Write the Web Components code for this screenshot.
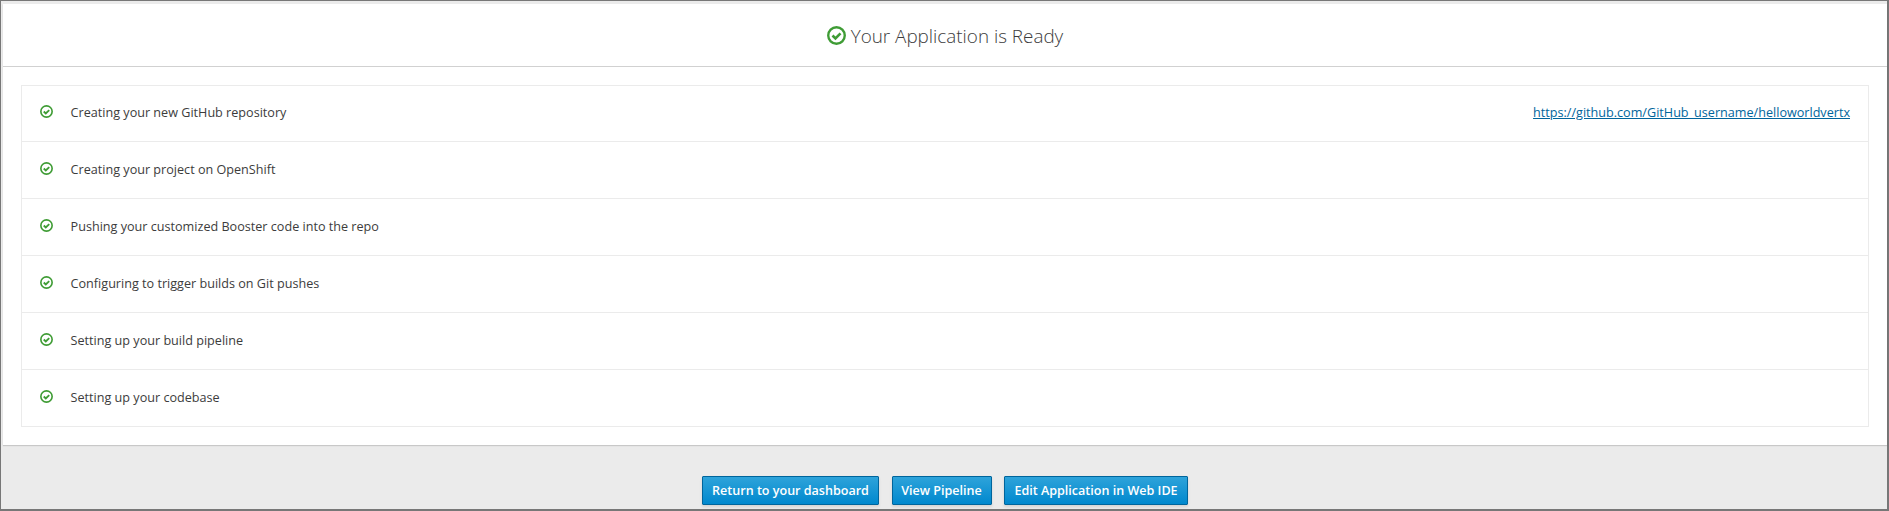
<!DOCTYPE html>
<html lang="en">
<head>
<meta charset="utf-8">
<title>Your Application is Ready</title>
<style>
html,body{margin:0;height:100%}
body{font-family:"Open Sans",sans-serif;font-size:12.62px;color:#3c3c3c;overflow:hidden}
</style>
</head>
<body>
<ready-page>
  <ready-panel slot="panel">
    <span slot="title">Your Application is Ready</span>
    <step-row>Creating your new GitHub repository<ext-link slot="link" href="#">https://github.com/GitHub_username/helloworldvertx</ext-link></step-row>
    <step-row>Creating your project on OpenShift</step-row>
    <step-row>Pushing your customized Booster code into the repo</step-row>
    <step-row>Configuring to trigger builds on Git pushes</step-row>
    <step-row>Setting up your build pipeline</step-row>
    <step-row>Setting up your codebase</step-row>
  </ready-panel>
  <action-button slot="actions" style="--w:177px">Return to your dashboard</action-button>
  <action-button slot="actions" style="--w:100px">View Pipeline</action-button>
  <action-button slot="actions" style="--w:184px">Edit Application in Web IDE</action-button>
</ready-page>
<script>
const define = (name, html) => customElements.define(name, class extends HTMLElement {
  constructor() {
    super();
    this.attachShadow({mode: 'open'}).innerHTML = html;
  }
});

define('ok-icon', `<style>
:host{display:block;flex:none;width:var(--size,13px);height:var(--size,13px)}
svg{display:block;width:100%;height:100%}
</style><svg viewBox="0 0 20 20" fill="none" stroke="#3f9c35"><circle cx="10" cy="10" r="8.7" stroke-width="2.5"/><path d="M5.8 10l3.1 3.1 5.3-5.3" stroke-width="2.8"/></svg>`);

define('ext-link', `<style>
:host{display:block}
a{color:#00659c;text-decoration:underline}
</style><a href="#"><slot></slot></a>`);

define('step-row', `<style>
:host{display:flex;align-items:center;box-sizing:border-box;height:57px;padding:1px 18px 0;border-bottom:1px solid #ebebeb}
:host(:first-of-type){height:56px;padding-top:0}
ok-icon{margin:-4px 17.6px 0 0}
.label{flex:1;line-height:20px;margin-top:-2px}
.link{line-height:20px;margin-top:-2px}
</style><ok-icon></ok-icon><div class="label"><slot></slot></div><div class="link"><slot name="link"></slot></div>`);

define('ready-panel', `<style>
:host{display:block;box-sizing:border-box;height:441px;background:#fff;box-shadow:0 1px 1px rgba(3,3,3,.15)}
header{display:flex;justify-content:center;box-sizing:border-box;height:63px;border-bottom:1px solid #d1d1d1;padding-top:16px}
header ok-icon{--size:19px;margin:5.5px 5px 0 0}
h1{margin:0;font-size:18.85px;font-weight:300;line-height:32px}
.list{margin:18px 18px 0;border:1px solid #ebebeb;border-bottom:0}
</style><header><ok-icon></ok-icon><h1><slot name="title"></slot></h1></header><div class="list"><slot></slot></div>`);

define('action-button', `<style>
:host{display:block}
button{display:block;box-sizing:border-box;width:var(--w);height:29px;padding:0;border:1px solid #00659c;border-radius:1px;background:linear-gradient(#2ea3da,#0088ce);box-shadow:0 2px 3px rgba(3,3,3,.1);color:#fff;font:600 12.55px/25px "Open Sans",sans-serif;white-space:nowrap}
</style><button><slot></slot></button>`);

define('ready-page', `<style>
:host{display:block;box-sizing:border-box;width:100%;height:100vh;border:solid #777;border-width:1px 2px 2px 1px;background:#ebebeb;padding:3px 0 0 2px}
footer{display:flex;justify-content:center;gap:12.5px;padding:31px 0 0}
</style><slot name="panel"></slot><footer><slot name="actions"></slot></footer>`);
</script>
</body>
</html>
